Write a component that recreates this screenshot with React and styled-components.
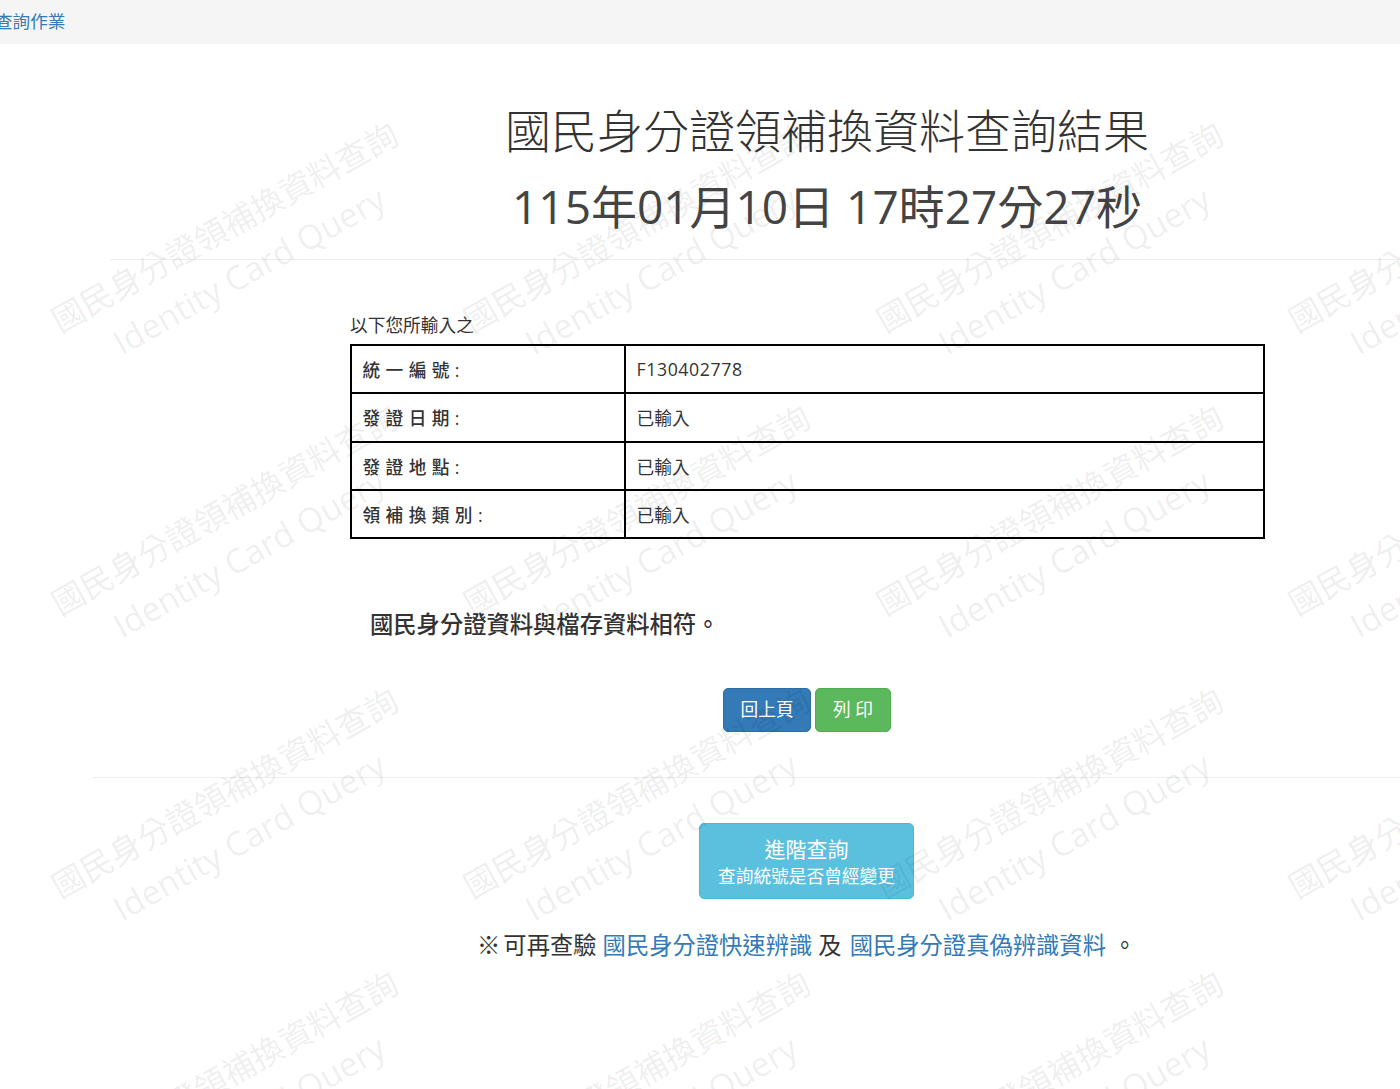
import styled, { createGlobalStyle } from 'styled-components';

const FONT = `"Open Sans", "Noto Sans CJK TC", sans-serif`;

const rows = [
  { label: '統 一 編 號 :', value: 'F130402778', spacing: 0.6 },
  { label: '發 證 日 期 :', value: '已輸入', spacing: 0 },
  { label: '發 證 地 點 :', value: '已輸入', spacing: 0 },
  { label: '領 補 換 類 別 :', value: '已輸入', spacing: 0 }
];

const App = () => {
  const tiles = Array.from({ length: 20 }, (_, i) => i);
  return (
    <Page>
      <GlobalStyle />
      <NavBar>
        <NavLink>查詢作業</NavLink>
      </NavBar>
      <Title>
        國民身分證領補換資料查詢結果
        <br />
        <TitleTime>115年01月10日 17時27分27秒</TitleTime>
      </Title>
      <TopRule />
      <InputNote>以下您所輸入之</InputNote>
      <DataTable>
        <tbody>
          {rows.map((r) => (
            <tr key={r.label}>
              <LabelCell>{r.label}</LabelCell>
              <ValueCell $spacing={r.spacing}>{r.value}</ValueCell>
            </tr>
          ))}
        </tbody>
      </DataTable>
      <Result>國民身分證資料與檔存資料相符。</Result>
      <ButtonRow>
        <Button $bg="#337ab7" $border="#2e6da4" $pad={16.5}>回上頁</Button>
        <Button $bg="#5cb85c" $border="#4cae4c" $pad={17}>列 印</Button>
      </ButtonRow>
      <BottomRule />
      <AdvancedRow>
        <AdvancedButton>
          <AdvancedTitle>進階查詢</AdvancedTitle>
          <AdvancedSub>查詢統號是否曾經變更</AdvancedSub>
        </AdvancedButton>
      </AdvancedRow>
      <Footer>
        <RefMark>※</RefMark> 可再查驗 <FooterLink>國民身分證快速辨識</FooterLink> 及{' '}
        <FooterLink $gap={2}>國民身分證真偽辨識資料</FooterLink>
        <Dot>。</Dot>
      </Footer>
      <Watermarks>
        {tiles.map((i) => (
          <Tile key={`tile${i}`}>
            <MarkCn>國民身分證領補換資料查詢</MarkCn>
            <MarkEn>Identity Card Query</MarkEn>
          </Tile>
        ))}
      </Watermarks>
    </Page>
  );
};

const GlobalStyle = createGlobalStyle`
  html, body {
    margin: 0;
    padding: 0;
    background: #fff;
    overflow: hidden;
  }
`;

const Page = styled.div`
  position: relative;
  width: 1400px;
  height: 1089px;
  overflow: hidden;
  font-family: ${FONT};
  font-size: 17.7px;
  color: #333;
`;

const NavBar = styled.div`
  height: 44px;
  padding-bottom: 3px;
  box-sizing: border-box;
  background-color: #f5f5f5;
  display: flex;
  align-items: center;
  overflow: hidden;
`;

const NavLink = styled.a`
  margin-left: -5px;
  font-size: 17.6px;
  color: #337ab7;
`;

const Title = styled.h1`
  margin: 48px 0 0 254px;
  width: 1146px;
  text-align: center;
  font-size: 46px;
  font-weight: 300;
  line-height: 76px;
  color: #333;
`;

const TitleTime = styled.span`
  font-weight: 400;
  color: #444;
`;

const TopRule = styled.hr`
  margin: 15px 0 0 110px;
  border: 0;
  border-top: 1px solid #eee;
`;

const InputNote = styled.div`
  margin: 53px 0 0 350px;
  height: 31px;
  line-height: 24px;
  font-size: 17.7px;
`;

const DataTable = styled.table`
  margin-left: 349.5px;
  width: 915px;
  height: 195px;
  border-collapse: collapse;
  table-layout: fixed;
  border: 2px solid #000;

  td {
    border: 2px solid #000;
    padding: 0 11px;
    font-size: 17.7px;
  }
`;

const LabelCell = styled.td`
  width: 274px;
  box-sizing: border-box;
  font-weight: 500;
  letter-spacing: 0.4px;
`;

const ValueCell = styled.td`
  letter-spacing: ${(p) => p.$spacing}px;
`;

const Result = styled.div`
  margin: 67px 0 0 370px;
  height: 36px;
  line-height: 36px;
  font-size: 23.3px;
  font-weight: 500;
`;

const ButtonRow = styled.div`
  margin: 46px 0 0 723px;
  display: flex;
  gap: 4px;
`;

const Button = styled.button`
  height: 44px;
  padding: 0 ${(p) => p.$pad}px 5px;
  border: 1px solid ${(p) => p.$border};
  border-radius: 5px;
  background-color: ${(p) => p.$bg};
  color: #fff;
  font-family: ${FONT};
  font-size: 17.7px;
`;

const BottomRule = styled.hr`
  margin: 45px 0 0 92px;
  border: 0;
  border-top: 1px solid #eee;
`;

const AdvancedRow = styled.div`
  margin: 45px 0 0 699px;
`;

const AdvancedButton = styled.div`
  width: 215px;
  height: 76px;
  box-sizing: border-box;
  padding-top: 10px;
  border-radius: 5px;
  border: 1px solid #46b8da;
  background-color: #5bc0de;
  color: #fff;
  text-align: center;
`;

const AdvancedTitle = styled.div`
  font-size: 21px;
  line-height: 30px;
`;

const AdvancedSub = styled.div`
  font-size: 17.7px;
  line-height: 24px;
`;

const Footer = styled.div`
  margin: 30px 0 0 477px;
  font-size: 23.3px;
  line-height: 32px;
  white-space: nowrap;
`;

const RefMark = styled.span`
  margin-right: -3px;
`;

const FooterLink = styled.a`
  margin-left: ${(p) => p.$gap || 0}px;
  color: #337ab7;
`;

const Dot = styled.span`
  margin-left: 7px;
`;

const Watermarks = styled.div`
  position: absolute;
  left: 30.5px;
  top: 108px;
  display: grid;
  grid-template-columns: repeat(4, 412.5px);
  grid-auto-rows: 283px;
  pointer-events: none;
`;

const Tile = styled.div`
  width: 412.5px;
  height: 283px;
  display: flex;
  flex-direction: column;
  align-items: center;
  justify-content: center;
  transform: rotate(-29.3deg);
  white-space: nowrap;
  color: rgba(0, 0, 0, 0.08);
`;

const MarkCn = styled.div`
  font-size: 32.6px;
  line-height: 46px;
`;

const MarkEn = styled.div`
  font-size: 33.5px;
  line-height: 52px;
`;

export default App;
